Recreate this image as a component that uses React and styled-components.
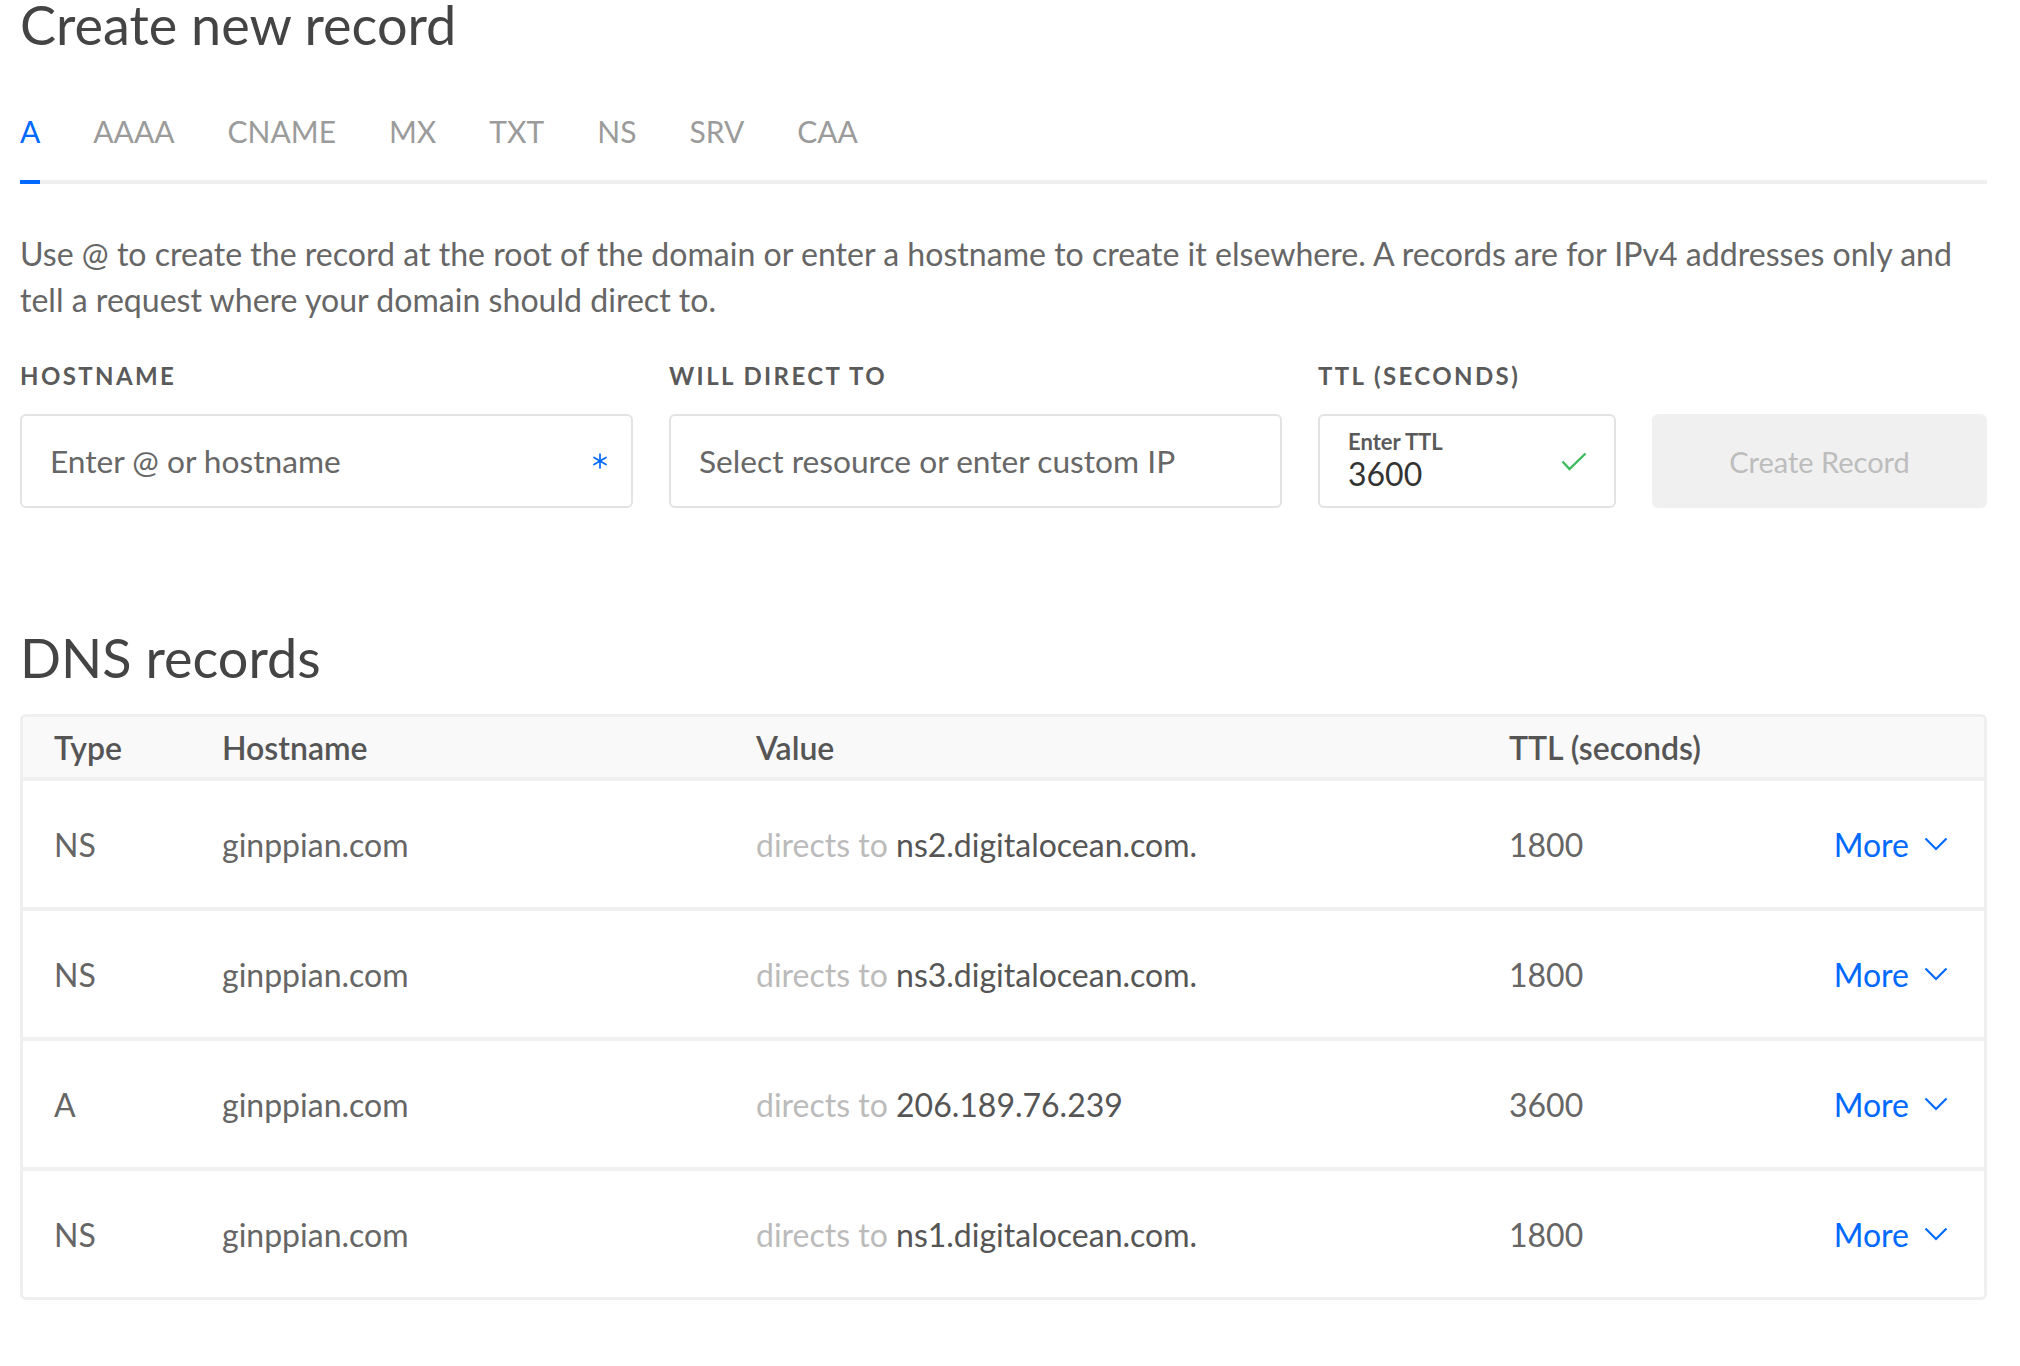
import React from 'react'
import styled, { createGlobalStyle } from 'styled-components'

const tabs = ['A', 'AAAA', 'CNAME', 'MX', 'TXT', 'NS', 'SRV', 'CAA']

const records = [
  { type: 'NS', host: 'ginppian.com', value: 'ns2.digitalocean.com.', ttl: '1800' },
  { type: 'NS', host: 'ginppian.com', value: 'ns3.digitalocean.com.', ttl: '1800' },
  { type: 'A', host: 'ginppian.com', value: '206.189.76.239', ttl: '3600' },
  { type: 'NS', host: 'ginppian.com', value: 'ns1.digitalocean.com.', ttl: '1800' },
]

const BLUE = '#0069ff'

const App = () => {
  return (
    <Page>
      <GlobalStyle />
      <Title>Create new record</Title>

      <TabBar>
        {tabs.map((t, i) => (
          <Tab key={t} $active={i === 0}>{t}</Tab>
        ))}
      </TabBar>

      <Description>
        Use @ to create the record at the root of the domain or enter a hostname to create it elsewhere. A records are for IPv4 addresses only and tell a request where your domain should direct to.
      </Description>

      <Form>
        <Label>Hostname</Label>
        <Label>Will direct to</Label>
        <Label>TTL (seconds)</Label>
        <span />

        <InputBox $padRight={24}>
          <Placeholder>Enter @ or hostname</Placeholder>
          <svg width="14" height="16" viewBox="0 0 14 16">
            <g stroke={BLUE} strokeWidth="1.7" strokeLinecap="round">
              <line x1="7" y1="1" x2="7" y2="15" />
              <line x1="1" y1="4.5" x2="13" y2="11.5" />
              <line x1="1" y1="11.5" x2="13" y2="4.5" />
            </g>
          </svg>
        </InputBox>

        <InputBox>
          <Placeholder>Select resource or enter custom IP</Placeholder>
        </InputBox>

        <InputBox $padRight={27}>
          <TtlStack>
            <SmallLabel>Enter TTL</SmallLabel>
            <TtlValue>3600</TtlValue>
          </TtlStack>
          <svg width="26" height="19" viewBox="0 0 26 19">
            <polyline points="1.5,9.5 8.5,17 24.5,1.5" fill="none" stroke="#3dbb5e" strokeWidth="2.4" />
          </svg>
        </InputBox>

        <CreateButton disabled>Create Record</CreateButton>
      </Form>

      <SubTitle>DNS records</SubTitle>

      <Table>
        <Row $head>
          <HeadCell>Type</HeadCell>
          <HeadCell>Hostname</HeadCell>
          <HeadCell>Value</HeadCell>
          <HeadCell>TTL (seconds)</HeadCell>
          <span />
        </Row>
        {records.map((r, i) => (
          <Row key={i}>
            <Cell>{r.type}</Cell>
            <Cell>{r.host}</Cell>
            <Cell>
              <Muted>directs to</Muted> <Value>{r.value}</Value>
            </Cell>
            <Cell>{r.ttl}</Cell>
            <More>
              More
              <svg width="24" height="14" viewBox="0 0 24 14">
                <polyline points="1.5,1.5 12,12 22.5,1.5" fill="none" stroke={BLUE} strokeWidth="2.2" />
              </svg>
            </More>
          </Row>
        ))}
      </Table>
    </Page>
  )
}

const GlobalStyle = createGlobalStyle`
  html, body {
    margin: 0;
    padding: 0;
    background: #fff;
  }
  body {
    font-family: Lato, "Liberation Sans", sans-serif;
    color: #444;
  }
  * {
    box-sizing: border-box;
  }
`

const Page = styled.div`
  width: 2020px;
  padding: 1px 33px 60px 20px;
`

const Title = styled.h1`
  margin: 0;
  font-size: 54px;
  line-height: 48px;
  font-weight: 400;
  color: #444;
`

const TabBar = styled.div`
  display: flex;
  gap: 53px;
  margin-top: 64px;
  border-bottom: 4px solid #f0f0f0;
`

const Tab = styled.div`
  font-size: 30px;
  line-height: 36px;
  padding-bottom: 31px;
  margin-bottom: -4px;
  border-bottom: 4px solid ${p => (p.$active ? BLUE : 'transparent')};
  color: ${p => (p.$active ? BLUE : '#9b9b9b')};
  cursor: pointer;
`

const Description = styled.p`
  margin: 47px 0 0;
  font-size: 32.1px;
  line-height: 46px;
  color: #666;
`

const Form = styled.div`
  display: grid;
  grid-template-columns: 1fr 1fr 298px 335px;
  column-gap: 36px;
  row-gap: 26px;
  margin-top: 41px;
`

const Label = styled.div`
  font-size: 24px;
  line-height: 24px;
  font-weight: 700;
  letter-spacing: 2.4px;
  text-transform: uppercase;
  color: #5a5a5a;
`

const InputBox = styled.div`
  height: 94px;
  border: 2px solid #e3e3e3;
  border-radius: 6px;
  background: #fff;
  display: flex;
  align-items: center;
  justify-content: space-between;
  padding: 0 ${p => p.$padRight || 28}px 0 28px;
`

const Placeholder = styled.span`
  font-size: 31.7px;
  color: #676767;
`

const TtlStack = styled.div`
  display: flex;
  flex-direction: column;
`

const SmallLabel = styled.span`
  font-size: 22px;
  line-height: 24px;
  font-weight: 700;
  color: #5a5a5a;
`

const TtlValue = styled.span`
  margin-top: 2px;
  font-size: 32px;
  line-height: 36px;
  color: #333;
`

const CreateButton = styled.button`
  height: 94px;
  border: none;
  border-radius: 6px;
  background: #f0f0f0;
  color: #bdbdbd;
  font-family: inherit;
  font-size: 29px;
`

const SubTitle = styled.h2`
  margin: 126px 0 0;
  font-size: 54px;
  line-height: 48px;
  font-weight: 400;
  color: #444;
`

const Table = styled.div`
  margin-top: 32px;
  border: 3px solid #efefef;
  border-radius: 6px;
  overflow: hidden;
`

const Row = styled.div`
  display: grid;
  grid-template-columns: 168px 534px 753px 1fr auto;
  align-items: center;
  height: ${p => (p.$head ? '60px' : '130px')};
  padding: 0 36px 0 31px;
  background: ${p => (p.$head ? '#f9f9f9' : '#fff')};

  & + & {
    border-top: 4px solid #f0f0f0;
  }
`

const HeadCell = styled.div`
  font-size: 32px;
  font-weight: 600;
  color: #555;
`

const Cell = styled.div`
  font-size: 32px;
  color: #666;
`

const Muted = styled.span`
  color: #bbb;
`

const Value = styled.span`
  color: #555;
`

const More = styled.a`
  display: flex;
  align-items: center;
  gap: 15px;
  font-size: 32px;
  color: ${BLUE};
  cursor: pointer;
`

export default App
